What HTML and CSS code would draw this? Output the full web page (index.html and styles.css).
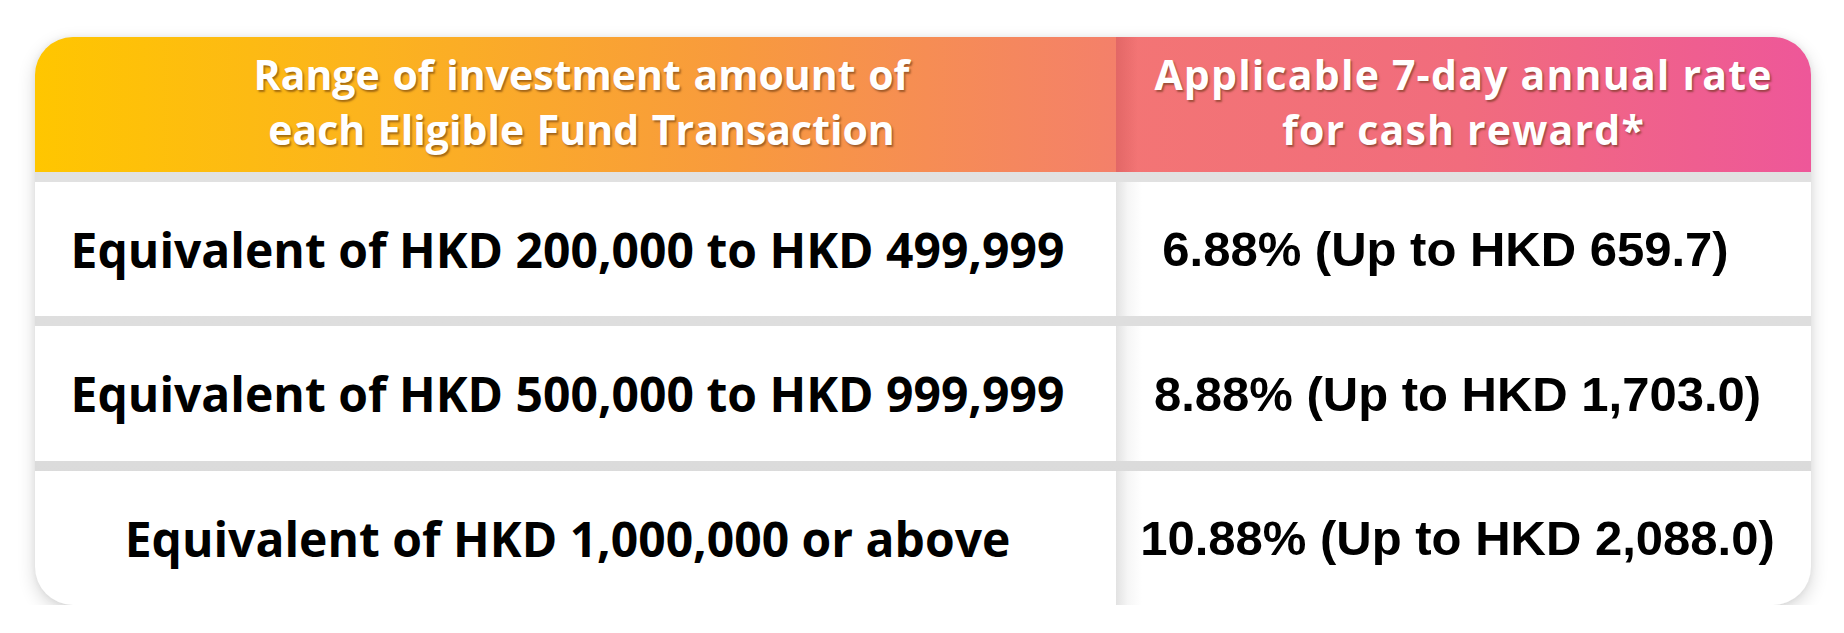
FILE: index.html
```html
<!DOCTYPE html>
<html lang="en">
<head>
<meta charset="utf-8">
<title>Cash reward rates</title>
<link rel="stylesheet" href="styles.css">
</head>
<body>
  <div class="card">
    <div class="row head">
      <div class="cell head-left"><span>Range of investment amount of<br>each Eligible Fund Transaction</span></div>
      <div class="cell head-right"><span>Applicable 7-day annual rate<br>for cash reward*</span></div>
    </div>
    <div class="row data">
      <div class="cell range">Equivalent of HKD 200,000 to HKD 499,999</div>
      <div class="cell rate rate-first">6.88% (Up to HKD 659.7)</div>
    </div>
    <div class="row data">
      <div class="cell range">Equivalent of HKD 500,000 to HKD 999,999</div>
      <div class="cell rate">8.88% (Up to HKD 1,703.0)</div>
    </div>
    <div class="row data last">
      <div class="cell range">Equivalent of HKD 1,000,000 or above</div>
      <div class="cell rate">10.88% (Up to HKD 2,088.0)</div>
    </div>
  </div>
</body>
</html>
```

FILE: styles.css
```css
html, body {
  margin: 0;
  padding: 0;
  background: #ffffff;
}

body {
  padding: 37px 0 0 35px;
}

.card {
  width: 1776px;
  border-radius: 38px;
  overflow: hidden;
  background: linear-gradient(#e4e4e4, #d8d8d8);
  box-shadow: 0 6px 18px rgba(0, 0, 0, 0.16), 0 0 6px rgba(0, 0, 0, 0.06);
  display: flex;
  flex-direction: column;
  gap: 10px;
}

.row {
  display: grid;
  grid-template-columns: 1081px 695px;
  height: 135px;
}

.row.data {
  height: 134px;
}

.row.data:nth-child(3) {
  height: 135px;
}

.cell {
  display: flex;
  align-items: center;
  justify-content: center;
  text-align: center;
  box-sizing: border-box;
}

.head .cell {
  font-family: "Open Sans", "DejaVu Sans", sans-serif;
  font-weight: 700;
  font-size: 41px;
  line-height: 55px;
  color: #ffffff;
  text-shadow: 1.5px 2px 2px rgba(90, 45, 10, 0.55);
  padding-bottom: 6px;
}

.head-left {
  background: linear-gradient(90deg, #ffc600 0%, #fcb41d 30%, #f89a3e 65%, #f4806a 100%);
  padding-left: 12px;
  word-spacing: 2px;
}

.head-right {
  background:
    linear-gradient(90deg, rgba(150, 40, 40, 0.18) 0px, rgba(150, 40, 40, 0) 22px),
    linear-gradient(90deg, #f37574 0%, #f16c7d 50%, #ee5799 100%);
  letter-spacing: 1.2px;
}

.data .cell {
  background: #ffffff;
  color: #000000;
}

.range {
  font-family: "Open Sans", "DejaVu Sans", sans-serif;
  font-weight: 700;
  font-size: 48px;
  padding-right: 16px;
}

.rate {
  font-family: "Liberation Sans", Arial, sans-serif;
  font-weight: 700;
  font-size: 49px;
  padding-right: 12px;
}

.rate-first {
  padding-right: 36px;
}

.data .rate {
  background: linear-gradient(90deg, #e2e2e2 0px, #f6f6f6 12px, #ffffff 26px);
}
```
